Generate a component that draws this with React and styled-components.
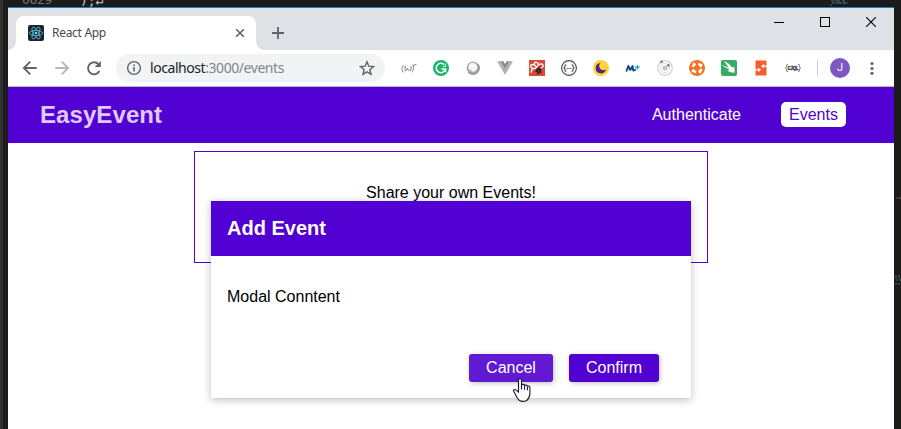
import React from 'react';
import styled, { createGlobalStyle } from 'styled-components';

const PURPLE = '#5101d1';

const GlobalStyle = createGlobalStyle`
  * { box-sizing: border-box; }
  body { margin: 0; overflow: hidden; background: #1c1c1c; font-family: "Liberation Sans", Arial, sans-serif; }
  svg { display: block; flex: none; }
`;

const Desktop = styled.div`
  position: relative;
  width: 901px;
  height: 429px;
  overflow: hidden;
  display: flex;
  flex-direction: column;
  background: #1b1b1a;
  border-left: 3px solid #303030;
`;

const EditorLine = styled.div`
  height: 7px;
  flex: none;
  overflow: hidden;
  display: flex;
  align-items: flex-end;
  padding-left: 19px;
  font: 13px/11px "DejaVu Sans Mono", monospace;
  color: #c8c8c8;
  white-space: pre;
`;

const LineNumber = styled.span`
  width: 58px;
  padding-bottom: 2px;
  letter-spacing: -0.3px;
  color: #777;
`;

const CodeText = styled.span`
  flex: 1;
  padding-bottom: 1px;
`;

const EditorRow = styled.div`
  flex: 1;
  min-height: 0;
  display: flex;
  padding-left: 5px;
`;

const Minimap = styled.svg`
  margin-top: 186px;
`;

const BrowserWindow = styled.div`
  width: 886px;
  flex: none;
  display: flex;
  flex-direction: column;
  background: #fff;
  border-top: 1px solid #1c7fc9;
`;

const TabStrip = styled.div`
  height: 42px;
  flex: none;
  display: flex;
  padding: 8px 16px 0 8px;
  background: #dee1e6;
`;

const Tab = styled.div`
  position: relative;
  width: 240px;
  height: 34px;
  display: flex;
  align-items: center;
  padding: 0 11px 0 12px;
  background: #fff;
  border-radius: 8px 8px 0 0;
  &::before, &::after {
    content: "";
    position: absolute;
    bottom: 0;
    width: 8px;
    height: 8px;
  }
  &::before { left: -8px; background: radial-gradient(circle at 0 0, transparent 7.5px, #fff 8px); }
  &::after { right: -8px; background: radial-gradient(circle at 100% 0, transparent 7.5px, #fff 8px); }
`;

const TabTitle = styled.span`
  flex: 1;
  margin-left: 8px;
  font: 12px/16px "Noto Sans", "Open Sans", sans-serif;
  letter-spacing: -0.3px;
  color: #45494d;
`;

const NewTab = styled.div`
  margin: 10px auto 0 15px;
`;

const WindowControls = styled.div`
  display: flex;
  gap: 36px;
  margin: 1px 2px 0 0;
`;

const Toolbar = styled.div`
  height: 37px;
  flex: none;
  display: flex;
  align-items: center;
  padding: 0 0 1px 14px;
  border-bottom: 1px solid #b9b9b9;
`;

const NavButtons = styled.div`
  display: flex;
  gap: 16px;
`;

const AddressBar = styled.div`
  width: 269px;
  height: 28px;
  margin-left: 14px;
  padding: 0 10px;
  display: flex;
  align-items: center;
  border-radius: 14px;
  background: #f1f3f4;
`;

const Url = styled.span`
  flex: 1;
  margin-left: 8px;
  font: 14px/18px "Noto Sans", "Open Sans", sans-serif;
  letter-spacing: -0.44px;
  color: #202124;
`;

const UrlPath = styled.span`
  color: #80868b;
`;

const Extensions = styled.div`
  display: flex;
  gap: 16px;
  margin-left: 16px;
`;

const Divider = styled.div`
  width: 1px;
  height: 16px;
  margin-left: 16px;
  background: #c9ccd0;
`;

const Avatar = styled.div`
  width: 20px;
  height: 20px;
  margin: 0 20px 0 12px;
  border-radius: 50%;
  background: #7e57c2;
  color: #fff;
  font: 11px/20px Roboto, sans-serif;
  text-align: center;
`;

const Page = styled.div`
  flex: 1;
  display: flex;
  flex-direction: column;
  align-items: center;
`;

const PageHeader = styled.header`
  width: 100%;
  height: 56px;
  display: flex;
  align-items: center;
  padding: 0 48px 0 32px;
  background: ${PURPLE};
`;

const Brand = styled.h1`
  flex: 1;
  margin: 0;
  font-size: 24px;
  line-height: 28px;
  letter-spacing: 0.08px;
  color: #dfc9ff;
`;

const PageNav = styled.nav`
  display: flex;
  gap: 32px;
  margin-bottom: 1px;
`;

const NavLink = styled.a`
  padding: 4px 8px;
  border-radius: 5px;
  font-size: 16px;
  line-height: 17px;
  letter-spacing: 0.01px;
  color: ${(p) => (p.$active ? PURPLE : '#fff')};
  background: ${(p) => (p.$active ? '#fff' : 'transparent')};
`;

const ShareCard = styled.section`
  width: 514px;
  height: 112px;
  margin-top: 8px;
  padding-top: 32px;
  border: 1px solid ${PURPLE};
  text-align: center;
  font-size: 16px;
  line-height: 18px;
  color: #000;
`;

const Modal = styled.section`
  position: absolute;
  left: 208px;
  top: 201px;
  width: 480px;
  height: 197px;
  display: flex;
  flex-direction: column;
  background: #fff;
  box-shadow: 0 2px 8px rgba(0, 0, 0, 0.26);
`;

const ModalHeader = styled.header`
  height: 55px;
  padding: 0 16px;
  background: ${PURPLE};
  color: #fff;
  font-size: 20px;
  font-weight: bold;
  line-height: 54px;
`;

const ModalContent = styled.div`
  flex: 1;
  padding: 32px 16px 30px;
  font-size: 16px;
  line-height: 18px;
  color: #000;
`;

const ModalActions = styled.div`
  display: flex;
  justify-content: flex-end;
  gap: 16px;
  padding: 0 32px 16px;
`;

const ActionButton = styled.button`
  width: ${(p) => p.$width}px;
  height: 28px;
  padding: 0;
  border: 0;
  border-radius: 3px;
  background: ${(p) => (p.$hovered ? '#6219d3' : PURPLE)};
  box-shadow: 1px 1px 5px rgba(0, 0, 0, 0.26);
  color: #fff;
  font: 16px/26px "Liberation Sans", Arial, sans-serif;
`;

const Pointer = styled.svg`
  position: absolute;
  left: 509px;
  top: 377px;
`;

const Icon = ({ size = 16, children }) => (
  <svg width={size} height={size} viewBox="0 0 16 16" fill="none">{children}</svg>
);

const ReactIcon = () => (
  <Icon>
    <rect width="16" height="16" rx="2" fill="#20232a" />
    <g stroke="#58bddb" strokeWidth=".8">
      <ellipse cx="8" cy="8" rx="6.6" ry="2.6" />
      <ellipse cx="8" cy="8" rx="6.6" ry="2.6" transform="rotate(60 8 8)" />
      <ellipse cx="8" cy="8" rx="6.6" ry="2.6" transform="rotate(120 8 8)" />
    </g>
    <circle cx="8" cy="8" r="1.3" fill="#61dafb" />
  </Icon>
);

const BackIcon = ({ color, flip }) => (
  <Icon>
    <path d="M14.7 8H2.2M8.2 1.7 1.9 8l6.3 6.3" stroke={color} strokeWidth="1.9" transform={flip ? 'translate(16 0) scale(-1 1)' : undefined} />
  </Icon>
);

const ReloadIcon = () => (
  <Icon>
    <path d="M13.4 11A6 6 0 1 1 12.4 4.1" stroke="#5f6368" strokeWidth="1.9" />
    <path d="M14.8 1v6H8.8z" fill="#5f6368" />
  </Icon>
);

const InfoIcon = () => (
  <Icon>
    <circle cx="8" cy="8" r="6.4" stroke="#5f6368" strokeWidth="1.4" />
    <path d="M7.2 7h1.6v4.4H7.2zM7.2 4.4h1.6V6H7.2z" fill="#5f6368" />
  </Icon>
);

const StarIcon = () => (
  <Icon>
    <path d="m8 1.8 1.8 4.4 4.7.4-3.6 3.1 1.1 4.6L8 11.8l-4 2.5 1.1-4.6-3.6-3.1 4.7-.4z" stroke="#5f6368" strokeWidth="1.4" />
  </Icon>
);

const ExtensionIcons = () => (
  <Extensions>
    <Icon>
      <g stroke="#8c8c8c" strokeWidth="1">
        <path d="M2.5 5Q-.6 8.5 2 12.5M4.7 6q-1.7 3 0 4.6 1.5 0 2-2.5 0 2.7 2 2.4 2-1.2 1.4-4.5M11 5q2-.5 1.7 2-.4 4-1.8 5.4M12.8 6q0-2 2.6-1.5" />
        <path d="M3.3 10.5q1 1 2.4 0M8 10.6q2 .5 3-1.2M3.5 7l2 2M9 6.5l2 2.5" stroke="#b4b4b4" />
      </g>
    </Icon>
    <Icon>
      <circle cx="8" cy="8" r="8" fill="#18b66a" />
      <path d="M11.2 4.6A4.7 4.7 0 1 0 12.5 9H8.4M12.5 9v3.3" stroke="#fff" strokeWidth="1.6" />
      <path d="M12.7 3.5v3.1H9.8" stroke="#fff" strokeWidth=".8" />
    </Icon>
    <Icon>
      <circle cx="8" cy="8" r="6.4" fill="#a5a5a5" />
      <path d="M3 12a6.3 6.3 0 0 0 10-8" stroke="#898989" />
      <circle cx="7.8" cy="7.2" r="4.5" fill="#f5f5f5" />
      <path d="M4.8 10q.6 1 2 1.2" stroke="#bbb" strokeWidth="1.6" />
    </Icon>
    <Icon>
      <path d="M0 1.3h3.4L8 9.2l4.6-7.9H16L8 15z" fill="#b2b2b2" />
      <path d="M3.4 1.3h3L8 4l1.6-2.7h3L8 9.2z" fill="#8c8c8c" />
    </Icon>
    <Icon>
      <rect width="16" height="16" fill="#d84b3c" />
      <g stroke="#fff" strokeWidth="1.3">
        <path d="M2.5 12.6q-.9-1.7 1.7-4Q1 7.5 1.5 5.5 2.4 4 5 5q0-3 2.5-2.7Q9 2.4 9.5 4.8 13 3 14 5q.8 2-2 3M5 5q2 .5 3 3M4.2 8.6 8 8M9.5 5 8 7.5" />
      </g>
      <ellipse cx="9.6" cy="10.6" rx="2.3" ry="3" fill="#241b1b" transform="rotate(-25 9.6 10.6)" />
      <path d="m6 11.5 6.5-2M7.5 14l5.2-1.8M8.5 7.8l2.4-1.6" stroke="#241b1b" strokeWidth=".9" />
      <path d="m8.7 9 2 4" stroke="#d84b3c" strokeWidth=".7" />
    </Icon>
    <Icon>
      <circle cx="8" cy="8" r="7.4" fill="#fff" stroke="#454545" strokeWidth="1.1" />
      <path d="M5.3 4.8H5q-1 0-1 1v1.1L3 8l1 1.1v1.1q0 1 1 1h.3M10.7 4.8h.3q1 0 1 1v1.1L13 8l-1 1.1v1.1q0 1-1 1h-.3" stroke="#454545" strokeWidth="1.1" />
      <path d="M5.6 8.5h5" stroke="#454545" strokeWidth="1.1" strokeDasharray="1.1 .8" />
    </Icon>
    <Icon>
      <circle cx="8" cy="8" r="8" fill="#fbd23c" />
      <path d="M7.6 3A5.2 5.2 0 1 0 13 9.3 3.6 3.6 0 0 1 7.6 3" fill="#4b267c" />
    </Icon>
    <Icon>
      <path d="M1.6 10.8 3.3 6l2 4L7.6 6l.5 4q.5 1 2.1-.2" stroke="#0b4c78" strokeWidth="1.9" strokeLinejoin="round" strokeLinecap="round" />
      <path d="M12.4 4.9v4.6M10.1 7.2h4.6" stroke="#159bd7" strokeWidth="1.3" />
    </Icon>
    <Icon>
      <circle cx="8" cy="8" r="7.3" stroke="#ccc" strokeWidth="1.1" />
      <circle cx="8" cy="8" r="4.7" stroke="#d8d8d8" strokeWidth=".9" />
      <circle cx="8" cy="8" r="2.6" fill="#c4c4c4" />
      <circle cx="4.4" cy="1.8" r="1.5" fill="#888" />
      <circle cx="11.4" cy="5.2" r="1.5" fill="#888" />
    </Icon>
    <Icon>
      <circle cx="8" cy="8" r="8" fill="#f47128" />
      <circle cx="8" cy="8" r="4.4" stroke="#fff" strokeWidth="2.5" strokeDasharray="4.2 2.71" transform="rotate(10 8 8)" />
      <path d="m4 2.7 1.5 1.8M13.3 4l-1.8 1.5M12 13.3l-1.5-1.8M2.7 12l1.8-1.5" stroke="#fff" strokeWidth="1.1" />
    </Icon>
    <Icon>
      <rect width="16" height="16" rx="2" fill="#36ab61" />
      <path d="M0 4.3q3.5 3.5 8.5 5.2-1.3.7-2 1.6 3 1.6 7 1.7.4-3.3-.5-6.4-.9.5-1.5 1.4Q8.5 3.6 3 .8q1.8 4 5 6.6Q3.6 6.5 0 4.3" fill="#fff" />
    </Icon>
    <Icon>
      <rect x="2.5" y=".5" width="11" height="15" fill="#fc5b2c" />
      <path d="M14 6.2h-3.2M2 9.8h3.2" stroke="#fff" strokeWidth="1.3" />
      <path d="M11 3.8v4.8L8 6.2zM5 7.4v4.8l3-2.4z" fill="#fff" />
    </Icon>
    <Icon>
      <path d="M3 4.2q-1.7 0-1.5 2Q1.6 7.6.4 8q1.2.4 1.1 1.8-.2 2 1.5 2M13 4.2q1.7 0 1.5 2-.1 1.4 1.1 1.8-1.2.4-1.1 1.8.2 2-1.5 2" stroke="#555" strokeWidth=".8" />
      <text x="2.5" y="10" fontSize="5.5" fontWeight="bold" fontFamily="Liberation Sans, sans-serif" textLength="11" lengthAdjust="spacingAndGlyphs" fill="#222" stroke="#222" strokeWidth=".3">CJQL</text>
    </Icon>
  </Extensions>
);

export default function App() {
  return (
    <>
      <GlobalStyle />
      <Desktop>
        <EditorLine>
          <LineNumber>0629</LineNumber>
          <CodeText>);↵</CodeText>
          <svg width="71" height="7">
            <path d="M1 1h14M2 3h15" stroke="#497583" strokeDasharray="3 1 5 2" />
            <path d="M10 3h9M0 5h2" stroke="#66523f" strokeDasharray="2 1" />
          </svg>
        </EditorLine>
        <EditorRow>
          <BrowserWindow>
            <TabStrip>
              <Tab>
                <ReactIcon />
                <TabTitle>React App</TabTitle>
                <svg width="10" height="10" viewBox="0 0 10 10"><path d="m1.2 1.2 7.6 7.6m0-7.6L1.2 8.8" stroke="#5f6368" strokeWidth="1.6" /></svg>
              </Tab>
              <NewTab>
                <svg width="14" height="14"><path d="M7 1v12M1 7h12" stroke="#5f6368" strokeWidth="1.8" /></svg>
              </NewTab>
              <WindowControls>
                <svg width="10" height="10"><path d="M0 5.5h10" stroke="#000" /></svg>
                <svg width="10" height="10"><rect x=".5" y=".5" width="9" height="9" fill="none" stroke="#000" /></svg>
                <svg width="10" height="10"><path d="m0 0 10 10M10 0 0 10" stroke="#000" strokeWidth="1.1" /></svg>
              </WindowControls>
            </TabStrip>
            <Toolbar>
              <NavButtons>
                <BackIcon color="#5f6368" />
                <BackIcon color="#b5b7b9" flip />
                <ReloadIcon />
              </NavButtons>
              <AddressBar>
                <InfoIcon />
                <Url>localhost<UrlPath>:3000/events</UrlPath></Url>
                <StarIcon />
              </AddressBar>
              <ExtensionIcons />
              <Divider />
              <Avatar>J</Avatar>
              <svg width="4" height="14"><g fill="#5f6368"><circle cx="2" cy="2.5" r="1.6" /><circle cx="2" cy="7.5" r="1.6" /><circle cx="2" cy="12.3" r="1.6" /></g></svg>
            </Toolbar>
            <Page>
              <PageHeader>
                <Brand>EasyEvent</Brand>
                <PageNav>
                  <NavLink>Authenticate</NavLink>
                  <NavLink $active>Events</NavLink>
                </PageNav>
              </PageHeader>
              <ShareCard>Share your own Events!</ShareCard>
            </Page>
          </BrowserWindow>
          <Minimap width="7" height="100">
            <path d="M2 5h5" stroke="#79523f" strokeDasharray="1 1 3 1" />
            <path d="M1 83h6M2 87h5M1 91h6" stroke="#3f6774" strokeWidth="1.2" strokeDasharray="2 1" />
            <path d="M1 85h5" stroke="#674f43" strokeDasharray="2 1" />
          </Minimap>
        </EditorRow>
        <Modal>
          <ModalHeader>Add Event</ModalHeader>
          <ModalContent>Modal Conntent</ModalContent>
          <ModalActions>
            <ActionButton $width={84} $hovered>Cancel</ActionButton>
            <ActionButton $width={90}>Confirm</ActionButton>
          </ModalActions>
        </Modal>
        <Pointer width="20" height="26" viewBox="0 0 20 26">
          <path d="M6.5 15V3.3q0-1.6 1.5-1.6t1.5 1.6v4.3q2.6-.7 3 .7 2.4-.6 2.9.7 2.5-.3 2.5 1.7v5.7q-.2 4.4-3.2 7.1-4.4 1.8-7.2 0-2.5-2.2-3.7-5.3l-2.4-4.8q1-1.8 2.8-.2z" fill="#fff" stroke="#17162d" strokeWidth="1.1" />
          <path d="M9.5 7.5v5M12.5 8.5v4.3M15.4 9.5v3.7" stroke="#17162d" strokeWidth="1.1" fill="none" />
        </Pointer>
      </Desktop>
    </>
  );
}
